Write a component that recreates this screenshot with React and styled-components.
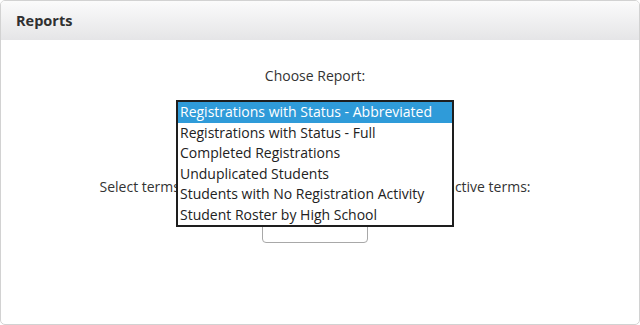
import styled, { createGlobalStyle } from "styled-components";

const GlobalStyle = createGlobalStyle`
  html, body { margin: 0; padding: 0; background: #fff; }
  body { font-family: "Open Sans", "Liberation Sans", sans-serif; }
`;

const reports = [
  "Registrations with Status - Abbreviated",
  "Registrations with Status - Full",
  "Completed Registrations",
  "Unduplicated Students",
  "Students with No Registration Activity",
  "Student Roster by High School",
];

export default function App() {
  return (
    <>
      <GlobalStyle />
      <Panel>
        <Header>Reports</Header>
        <Body>
          <Label>Choose Report:</Label>
          <SelectWrap>
            <HiddenSelect />
            <OptionList>
              {reports.map((r, i) => (
                <Option key={r} selected={i === 0}>
                  {r}
                </Option>
              ))}
            </OptionList>
          </SelectWrap>
          <TermsRow>
            <TermLabel>Select terms:</TermLabel>
            <TermLabel align="right">Show inactive terms:</TermLabel>
          </TermsRow>
          <TermBox />
        </Body>
      </Panel>
    </>
  );
}

const Panel = styled.div`
  width: 640px;
  height: 325px;
  box-sizing: border-box;
  border: 1px solid #d2d2d2;
  border-radius: 5px;
  overflow: hidden;
  display: flex;
  flex-direction: column;
`;

const Header = styled.div`
  height: 39px;
  flex: none;
  display: flex;
  align-items: center;
  padding-left: 15px;
  background: linear-gradient(#fbfbfb, #e5e5e7);
  font-weight: 700;
  font-size: 14.5px;
  color: #303030;
`;

const Body = styled.div`
  display: flex;
  flex-direction: column;
  align-items: center;
  padding-top: 27px;
  padding-right: 10px;
`;

const Label = styled.div`
  font-size: 14px;
  color: #333;
  line-height: 18px;
`;

const SelectWrap = styled.div`
  position: relative;
  margin-top: 15px;
  width: 278px;
  height: 22px;
`;

const HiddenSelect = styled.div`
  height: 100%;
  border: 1px solid #aaa;
  border-radius: 4px;
`;

const OptionList = styled.ul`
  position: absolute;
  top: 0;
  left: 0;
  z-index: 2;
  margin: 0;
  padding: 0;
  list-style: none;
  width: 278px;
  box-sizing: border-box;
  border: 2px solid #1e1e1e;
  background: #fff;
`;

const Option = styled.li`
  height: 20.5px;
  line-height: 20.5px;
  padding-left: 2px;
  font-size: 14px;
  white-space: nowrap;
  color: ${(p) => (p.selected ? "#fff" : "#222")};
  background: ${(p) => (p.selected ? "#2f9bd9" : "transparent")};
`;

const TermsRow = styled.div`
  width: 431px;
  display: flex;
  justify-content: space-between;
  margin-top: 56px;
  font-size: 14px;
  line-height: 18px;
  color: #333;
`;

const TermLabel = styled.span`
  text-align: ${(p) => p.align || "left"};
`;

const TermBox = styled.div`
  margin-top: 17px;
  width: 106px;
  height: 30px;
  box-sizing: border-box;
  border: 1px solid #a8a8a8;
  border-radius: 4px;
`;
